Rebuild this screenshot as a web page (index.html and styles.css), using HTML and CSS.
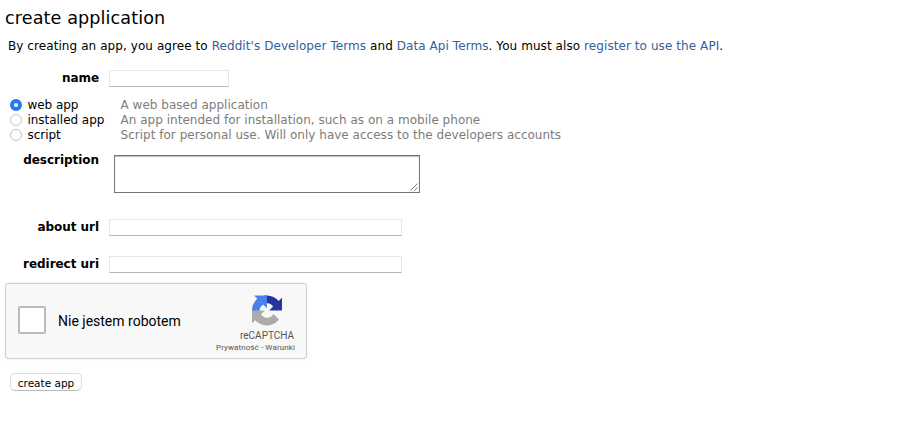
FILE: index.html
```html
<!DOCTYPE html>
<html lang="en">
<head>
<meta charset="utf-8">
<title>create application</title>
<link rel="stylesheet" href="styles.css">
</head>
<body>
<form class="app-form">
  <h1 class="title">create application</h1>
  <p class="terms">By creating an app, you agree to <a href="#">Reddit's Developer Terms</a> and <a href="#">Data Api Terms</a>. You must also <a href="#">register to use the API</a>.</p>
  <div class="row row-name"><label class="label" for="name">name</label><input class="field field-short" id="name" type="text"></div>
  <div class="types">
    <label class="type"><span class="radio checked"></span><span class="type-name">web app</span><span class="hint">A web based application</span></label>
    <label class="type"><span class="radio"></span><span class="type-name">installed app</span><span class="hint">An app intended for installation, such as on a mobile phone</span></label>
    <label class="type"><span class="radio"></span><span class="type-name">script</span><span class="hint">Script for personal use. Will only have access to the developers accounts</span></label>
  </div>
  <div class="row row-description"><label class="label">description</label><div class="area"><svg class="grip" width="8" height="8" viewBox="0 0 8 8"><path d="M.5 7.5l7-7M4.5 7.5l3-3"/></svg></div></div>
  <div class="row row-about"><label class="label" for="about">about url</label><input class="field" id="about" type="text"></div>
  <div class="row row-redirect"><label class="label" for="redirect">redirect uri</label><input class="field" id="redirect" type="text"></div>
  <div class="captcha">
    <span class="checkbox"></span>
    <span class="captcha-label">Nie jestem robotem</span>
    <div class="brand">
      <svg class="logo" width="30" height="31" viewBox="0 0 64 64">
        <path fill="#2634a0" d="M64 31.955l-.033-1.37V4.687l-7.16 7.16C50.948 4.674 42.033.093 32.05.093c-10.4 0-19.622 4.96-25.458 12.64l11.736 11.86a15.55 15.55 0 0 1 4.754-5.334c2.05-1.6 4.952-2.906 8.968-2.906.485 0 .86.057 1.135.163 4.976.393 9.288 3.14 11.828 7.124l-8.307 8.307L64 31.953"/>
        <path fill="#4a80ee" d="M31.862.094l-1.37.033H4.594l7.16 7.16C4.58 13.147 0 22.06 0 32.046c0 10.4 4.96 19.622 12.64 25.458L24.5 45.768a15.55 15.55 0 0 1-5.334-4.754c-1.6-2.05-2.906-4.952-2.906-8.968 0-.485.057-.86.163-1.135.393-4.976 3.14-9.288 7.124-11.828l8.307 8.307L31.86.095"/>
        <path fill="#ababab" d="M.001 32.045l.033 1.37v25.898l7.16-7.16c5.86 7.173 14.774 11.754 24.76 11.754 10.4 0 19.622-4.96 25.458-12.64l-11.736-11.86a15.55 15.55 0 0 1-4.754 5.334c-2.05 1.6-4.952 2.906-8.968 2.906-.485 0-.86-.057-1.135-.163-4.976-.393-9.288-3.14-11.828-7.124l8.307-8.307c-10.522.04-22.4.066-27.295-.005"/>
      </svg>
      <div class="brand-name">reCAPTCHA</div>
      <div class="brand-links">Prywatność - Warunki</div>
    </div>
  </div>
  <button class="submit" type="button">create app</button>
</form>
</body>
</html>
```
FILE: styles.css
```css
* { box-sizing: border-box; }
body { margin: 0; background: #fff; color: #000; font: 12px/15px Verdana, "DejaVu Sans", sans-serif; }
.app-form { padding: 7px 5px 0; white-space: nowrap; }
.title { margin: 0; font-size: 17.6px; line-height: 22px; font-weight: 400; letter-spacing: .1px; }
.terms { margin: 10px 0 0 3px; letter-spacing: .075px; }
.terms a { color: #336199; text-decoration: none; }
.row { display: flex; }
.label { width: 94px; padding-top: 1px; text-align: right; font-weight: 700; letter-spacing: -.04px; }
.field { width: 293px; height: 17px; margin: 0 0 0 10px; padding: 0; border: 1px solid #e6e6e6; border-bottom-color: #b5b5b5; background: #fff; outline: none; }
.field-short { width: 120px; }
.row-name { margin-top: 16px; }
.types { margin-top: 10px; }
.type { display: flex; height: 15px; align-items: flex-start; padding-left: 5px; }
.radio { width: 12px; height: 12px; margin-top: 2px; border: 1px solid #c4c4c4; border-radius: 50%; background: #fff; }
.radio.checked { border: 4px solid #2478fb; }
.type-name { width: 93px; margin: 1px 0 0 5.5px; letter-spacing: -.04px; }
.hint { margin-top: 1px; color: #7c7c7c; letter-spacing: .02px; }
.row-description { margin-top: 10px; }
.area { display: flex; justify-content: flex-end; align-items: flex-end; width: 306px; height: 38px; margin: 3px 0 0 15px; border: 1px solid #767676; box-shadow: inset 0 1px 1px #bbb; }
.grip { stroke: #555; stroke-width: .8; fill: none; margin: 0 1px 1px 0; }
.row-about { margin-top: 26px; }
.row-redirect { margin-top: 20px; }
.captcha { display: flex; width: 302px; height: 76px; margin-top: 10px; border: 1px solid #d0d0d0; border-radius: 3px; background: #f8f8f8; box-shadow: 0 0 3px rgba(0,0,0,.08); font-family: Roboto, sans-serif; }
.checkbox { width: 28px; height: 28px; margin: 22px 0 0 12px; border: 2px solid #bcbcbc; border-radius: 2px; background: #fff; }
.captcha-label { width: 146px; margin: 29px 0 0 12px; font-size: 14px; line-height: 17px; }
.brand { width: 90px; margin: 11px 0 0 11px; color: #555; }
.logo { display: block; margin: 0 0 0 37px; }
.brand-name { margin: 4px 0 0 25px; font-size: 10px; line-height: 12px; }
.brand-links { margin: 1px 0 0 1px; font-size: 8px; line-height: 10px; letter-spacing: .1px; }
.submit { display: block; width: 72px; height: 18px; margin: 14px 0 0 5px; padding: 2px 0 0; border: 1px solid #ddd; border-bottom-color: #bbb; border-radius: 5px; background: #fff; color: #000; font: 10.5px/14px Verdana, "DejaVu Sans", sans-serif; }
```
